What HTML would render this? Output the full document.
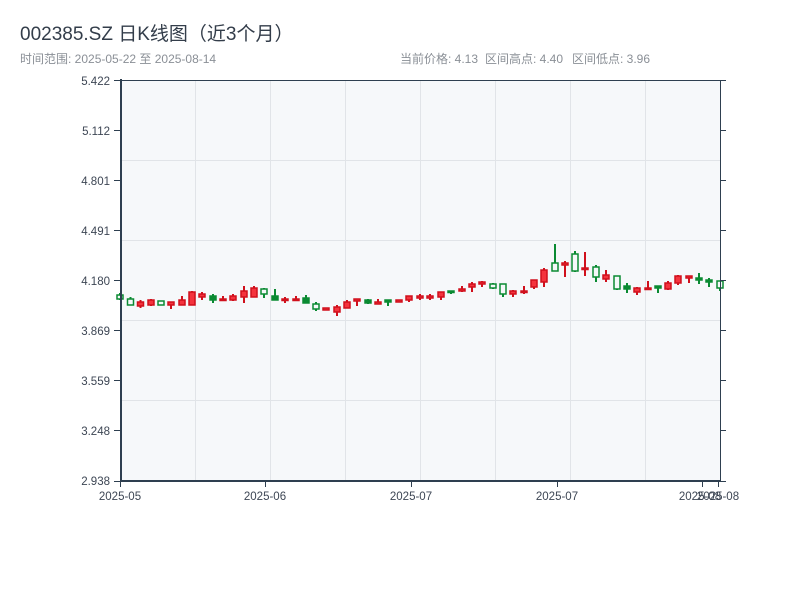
<!DOCTYPE html>
<html><head><meta charset="utf-8"><style>
html,body{margin:0;padding:0;background:#fff;width:800px;height:600px;overflow:hidden}
svg{display:block}
text{font-family:"Liberation Sans","Noto Sans CJK SC",sans-serif}
</style></head><body>
<svg id="s" width="800" height="600" xmlns="http://www.w3.org/2000/svg">
<text x="20" y="40" font-size="19" fill="#333d4a">002385.SZ 日K线图（近3个月）</text>
<text x="20" y="63" font-size="12" fill="#8a8f96">时间范围: 2025-05-22 至 2025-08-14</text>
<text x="400" y="63" font-size="12" fill="#8a8f96">当前价格: 4.13</text>
<text x="485" y="63" font-size="12" fill="#8a8f96">区间高点: 4.40</text>
<text x="572" y="63" font-size="12" fill="#8a8f96">区间低点: 3.96</text>
<rect x="121" y="80" width="599" height="401" fill="#f6f8fa"/>
<g stroke="#e1e4e8" stroke-width="1">
<line x1="195.5" y1="80" x2="195.5" y2="481"/><line x1="270.5" y1="80" x2="270.5" y2="481"/>
<line x1="345.5" y1="80" x2="345.5" y2="481"/><line x1="420.5" y1="80" x2="420.5" y2="481"/>
<line x1="495.5" y1="80" x2="495.5" y2="481"/><line x1="570.5" y1="80" x2="570.5" y2="481"/>
<line x1="645.5" y1="80" x2="645.5" y2="481"/>
<line x1="121" y1="160.5" x2="720" y2="160.5"/><line x1="121" y1="240.5" x2="720" y2="240.5"/>
<line x1="121" y1="320.5" x2="720" y2="320.5"/><line x1="121" y1="400.5" x2="720" y2="400.5"/>
</g>
<g id="c"></g>
<g stroke="#2e3f50" fill="none">
<line x1="121" y1="80.5" x2="720" y2="80.5" stroke-width="1"/>
<line x1="720.5" y1="80" x2="720.5" y2="481" stroke-width="1"/>
<line x1="121" y1="79" x2="121" y2="482" stroke-width="2"/>
<line x1="120" y1="481" x2="721" y2="481" stroke-width="2"/>
</g>
<g stroke="#2e3f50" stroke-width="1" id="t"></g>
<g font-size="11.5" fill="#3d4654" text-anchor="end">
<text x="110" y="85">5.422</text><text x="110" y="135">5.112</text><text x="110" y="185">4.801</text>
<text x="110" y="235">4.491</text><text x="110" y="285">4.180</text><text x="110" y="335">3.869</text>
<text x="110" y="385">3.559</text><text x="110" y="435">3.248</text><text x="110" y="485">2.938</text>
</g>
<g font-size="11.5" fill="#3d4654" text-anchor="middle">
<text x="120" y="500">2025-05</text><text x="265" y="500">2025-06</text><text x="411" y="500">2025-07</text>
<text x="557" y="500">2025-07</text><text x="700" y="500">2025-08</text><text x="718" y="500">2025-08</text>
</g>
</svg>
<script>
var d=[
[120,'g',0,295,299,293,300],[130.5,'g',0,299,305,297,305],[140.5,'r',1,302,306,300,308],[151,'r',1,300,305,299,306],
[161,'g',0,301,305,301,305],[171,'r',1,302,305,302,309],[182,'r',1,300,305,296,305],[192,'r',1,292,305,291,305],
[202,'r',1,294,297,292,300],[213,'g',1,296,300,294,303],[223,'r',1,299,300,296,300],[233,'r',1,296,300,294,301],
[244,'r',1,291,297,286,303],[254,'r',1,288,297,286,297],[264,'g',0,289,294,288,298],[275,'g',1,296,300,289,300],
[285,'r',1,299,300,297,303],[296,'r',1,299,300,296,300],[306,'g',1,298,303,295,303],[316,'g',0,304,309,302,311],
[326,'r',1,308,310,308,310],[337,'r',1,307,312,305,316],[347,'r',1,302,308,300,308],[357,'r',1,299,301,299,306],
[368,'g',1,300,303,299,304],[378,'r',1,302,304,299,304],[388,'g',1,300,302,300,306],[399,'r',1,300,302,300,302],
[409,'r',1,296,300,296,302],[420,'r',1,296,298,294,300],[430,'r',1,296,298,294,300],[441,'r',1,292,297,292,300],
[451,'g',1,291,292,291,294],[462,'r',1,289,291,286,292],[472,'r',1,284,287,282,292],[482,'r',1,282,284,281,287],
[493,'g',0,284,288,283,289],[503,'g',0,284,294,284,297],[513,'r',1,291,294,290,297],[524,'r',1,291,292,286,294],
[534,'r',1,280,287,280,289],[544,'r',1,270,282,268,287],[555,'g',0,263,271,244,271],[565,'r',1,263,265,261,277],
[575,'g',0,254,271,251,272],[585,'r',1,268,269,252,276],[596,'g',0,267,277,265,282],[606,'r',1,275,279,270,282],
[617,'g',0,276,289,276,290],[627,'g',1,286,289,283,293],[637,'r',1,288,292,287,295],[648,'r',1,288,289,281,289],
[658,'g',1,286,288,286,293],[668,'r',1,283,289,281,290],[678,'r',1,276,283,275,285],[689,'r',1,276,278,276,283],
[699,'g',1,278,280,273,284],[709,'g',1,280,282,278,287],[720,'g',0,281,288,281,291]];
var g=document.getElementById('c'),h='';
d.forEach(function(c){var col=c[1]=='r'?'#d0101c':'#0a8a32',fill=c[1]=='r'?'#f4333d':(c[2]?'#0a8a32':'#f6f8fa');
h+='<line x1="'+c[0]+'" y1="'+c[5]+'" x2="'+c[0]+'" y2="'+c[6]+'" stroke="'+col+'" stroke-width="2"/>';
var bh=Math.max(c[4]-c[3],1.5);
h+='<rect x="'+(c[0]-3)+'" y="'+c[3]+'" width="6" height="'+bh+'" fill="'+fill+'" stroke="'+col+'" stroke-width="1.5"/>';});
g.innerHTML=h;
var t='',ys=[80,130,180,230,280,330,380,430,481];
ys.forEach(function(y){t+='<line x1="114" y1="'+(y+.5)+'" x2="121" y2="'+(y+.5)+'"/><line x1="720" y1="'+(y+.5)+'" x2="726" y2="'+(y+.5)+'"/>';});
[120,265,411,557,702,718].forEach(function(x){t+='<line x1="'+(x+.5)+'" y1="481" x2="'+(x+.5)+'" y2="487"/>';});
document.getElementById('t').innerHTML=t;
</script>
</body></html>
